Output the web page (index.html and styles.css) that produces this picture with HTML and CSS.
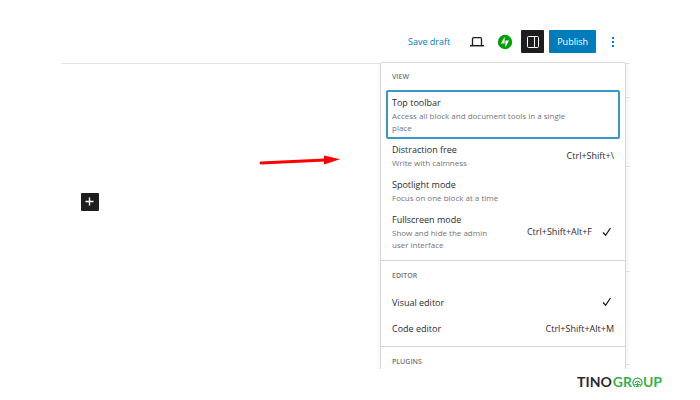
FILE: index.html
```html
<!DOCTYPE html>
<html lang="en">
<head>
    <meta charset="UTF-8">
    <meta name="viewport" content="width=device-width, initial-scale=1.0">
    <title>Editor options</title>
    <link rel="stylesheet" href="styles.css">
</head>
<body>
    <main class="editor">
        <header class="toolbar">
            <a class="save-draft" href="#">Save draft</a>
            <button class="icon-button" aria-label="Preview">
                <svg width="16" height="16" viewBox="0 0 16 16" fill="none" stroke="#1e1e1e">
                    <path d="M3.5 11V5q0-1.3 1.3-1.3h6.4q1.3 0 1.3 1.3v6" stroke-width="1.3"/>
                    <path d="M1 11.7h14" stroke-width="1.5"/>
                </svg>
            </button>
            <button class="icon-button" aria-label="Jetpack">
                <svg width="16" height="16" viewBox="0 0 16 16">
                    <circle cx="8" cy="8" r="7.2" fill="#069e08"/>
                    <path d="M7.6 2.8v6.6H4zM8.4 13.2V6.6H12z" fill="#fff"/>
                </svg>
            </button>
            <button class="icon-button sidebar-toggle" aria-label="Settings">
                <svg width="16" height="16" viewBox="0 0 16 16" fill="none" stroke="#fff">
                    <rect x="2.5" y="2.5" width="11" height="11" rx="1"/>
                    <path d="M9.5 2.5v11"/>
                </svg>
            </button>
            <button class="publish">Publish</button>
            <button class="icon-button more" aria-label="Options">
                <svg width="16" height="16" viewBox="0 0 16 16" fill="#007cba">
                    <rect x="7" y="3" width="2" height="2"/>
                    <rect x="7" y="7" width="2" height="2"/>
                    <rect x="7" y="11" width="2" height="2"/>
                </svg>
            </button>
        </header>

        <div class="workspace">
            <section class="canvas">
                <button class="inserter" aria-label="Add block">
                    <svg width="18" height="18" viewBox="0 0 18 18" stroke="#fff" stroke-width="1.3">
                        <path d="M8.5 4.5v8M4.5 8.5h8"/>
                    </svg>
                </button>
            </section>
            <aside class="sidebar">
                <div class="panel tabs"></div>
                <div class="panel summary"></div>
                <div class="panel details"></div>
                <div class="panel extra"></div>
            </aside>
        </div>

        <svg class="arrow" width="82" height="12" viewBox="0 0 82 12">
            <path d="M2 8L66 5" stroke="#f00" stroke-width="3" stroke-linecap="round"/>
            <path d="M65 0.5L81 4.2L65 9.5z" fill="#f00"/>
        </svg>

        <!-- Options menu, opens over the sidebar -->
        <div class="menu">
            <section class="group">
                <h2>View</h2>
                <button class="item selected">
                    <span class="text">Top toolbar <small>Access all block and document tools in a single place</small></span>
                </button>
                <button class="item">
                    <span class="text">Distraction free <small>Write with calmness</small></span>
                    <span class="shortcut">Ctrl+Shift+\</span>
                </button>
                <button class="item">
                    <span class="text">Spotlight mode <small>Focus on one block at a time</small></span>
                </button>
                <button class="item">
                    <span class="text narrow">Fullscreen mode <small>Show and hide the admin user interface</small></span>
                    <span class="shortcut">Ctrl+Shift+Alt+F</span>
                    <svg class="check" width="14" height="14" viewBox="0 0 14 14"><path d="M3 7.5l2.6 2.8L10.5 3"/></svg>
                </button>
            </section>
            <section class="group">
                <h2>Editor</h2>
                <button class="item single">
                    <span class="text">Visual editor</span>
                    <svg class="check" width="14" height="14" viewBox="0 0 14 14"><path d="M3 7.5l2.6 2.8L10.5 3"/></svg>
                </button>
                <button class="item single">
                    <span class="text">Code editor</span>
                    <span class="shortcut">Ctrl+Shift+Alt+M</span>
                </button>
            </section>
            <section class="group">
                <h2>Plugins</h2>
            </section>
        </div>
    </main>

    <footer class="brand">
        <span class="tino">TINO</span>
        <span class="group-name">GR<svg width="11" height="11" viewBox="0 0 12 12" fill="none" stroke="#39b04a">
            <path d="M3.2 10.3A5 5 0 1 1 8.8 10.3" stroke-width="1.4"/>
            <path d="M3.3 6.8a2.8 2.8 0 0 1 5.4 0" stroke-width="1.1"/>
            <path d="M2.6 8.2h6.8M4 10.2h4M6 6v5" stroke-width="1.2"/>
        </svg>UP</span>
    </footer>
</body>
</html>
```

FILE: styles.css
```css
* {
    box-sizing: border-box;
}

body {
    display: flex;
    flex-direction: column;
    height: 100vh;
    margin: 0;
    background-color: #fff;
    color: #2b2b2b;
    font-family: "Open Sans", "Noto Sans", sans-serif;
    font-size: 9px;
}

button {
    padding: 0;
    border: 0;
    background: none;
    color: inherit;
    font: inherit;
    cursor: pointer;
}

svg {
    display: block;
}

.editor {
    position: relative;
    display: flex;
    flex: 1;
    flex-direction: column;
    min-height: 0;
    margin: 20px 70px 0 61px;
    overflow: hidden;
}

/* Toolbar */
.toolbar {
    display: flex;
    flex-shrink: 0;
    align-items: center;
    justify-content: flex-end;
    gap: 5px;
    height: 44px;
    padding-right: 6px;
    border-bottom: 1px solid #e4e4e4;
}

.save-draft {
    margin-right: 10px;
    color: #007cba;
    text-decoration: none;
}

.icon-button {
    display: flex;
    align-items: center;
    justify-content: center;
    width: 23px;
    height: 23px;
}

.sidebar-toggle {
    border-radius: 1px;
    background-color: #1e1e1e;
}

.publish {
    height: 23px;
    padding: 0 8px;
    border-radius: 1px;
    background-color: #007cba;
    color: #fff;
}

/* Canvas and sidebar */
.workspace {
    display: flex;
    flex: 1;
}

.canvas {
    flex: 1;
    padding: 129px 20px;
}

.inserter {
    border-radius: 1px;
    background-color: #1e1e1e;
}

.sidebar {
    width: 190px;
    background-color: #fdfdfd;
}

.panel {
    border-bottom: 1px solid #e4e4e4;
}

.tabs {
    height: 34px;
}

.summary {
    height: 69px;
}

.details {
    height: 105px;
}

.extra {
    height: 93px;
}

.arrow {
    position: absolute;
    top: 135px;
    left: 198px;
}

/* Menu */
.menu {
    position: absolute;
    top: 42px;
    right: 4px;
    width: 246px;
    border: 1px solid #d8d8d8;
    border-radius: 2px;
    background-color: #fff;
    box-shadow: 0 2px 5px rgba(0, 0, 0, 0.08);
}

.group {
    padding: 8px 5px 4px;
}

.group + .group {
    padding: 9px 5px 5px;
    border-top: 1px solid #d4d4d4;
}

.group h2 {
    margin: 0 0 7px;
    padding-left: 6px;
    color: #757575;
    font-size: 7px;
    font-weight: 600;
    line-height: 12px;
    text-transform: uppercase;
}

.item {
    display: flex;
    align-items: center;
    width: 100%;
    padding: 1px 4px 3px;
    border: 2px solid transparent;
    border-radius: 2px;
    line-height: 15px;
    text-align: left;
}

.item.selected {
    padding: 3px 4px;
    border-color: #3a98cb;
}

.item.single {
    height: 26px;
    padding: 0 4px;
}

.text {
    flex: 1;
    max-width: 190px;
}

.text.narrow {
    max-width: 105px;
}

.text small {
    display: block;
    color: #757575;
    font-size: 8px;
    line-height: 12px;
}

.shortcut {
    margin-left: auto;
}

.check {
    margin-left: 8px;
    fill: none;
    stroke: #1e1e1e;
    stroke-width: 1.3;
}

.text + .check {
    margin-left: auto;
}

/* Footer logo */
.brand {
    display: flex;
    flex-shrink: 0;
    align-items: center;
    justify-content: flex-end;
    gap: 1px;
    height: 31px;
    padding: 0 38px 5px 0;
    font-family: Lato, sans-serif;
    font-size: 14px;
    font-weight: 700;
    line-height: 16px;
}

.tino {
    color: #2b2b2b;
}

.group-name {
    display: flex;
    align-items: center;
    color: #39b04a;
}
```
